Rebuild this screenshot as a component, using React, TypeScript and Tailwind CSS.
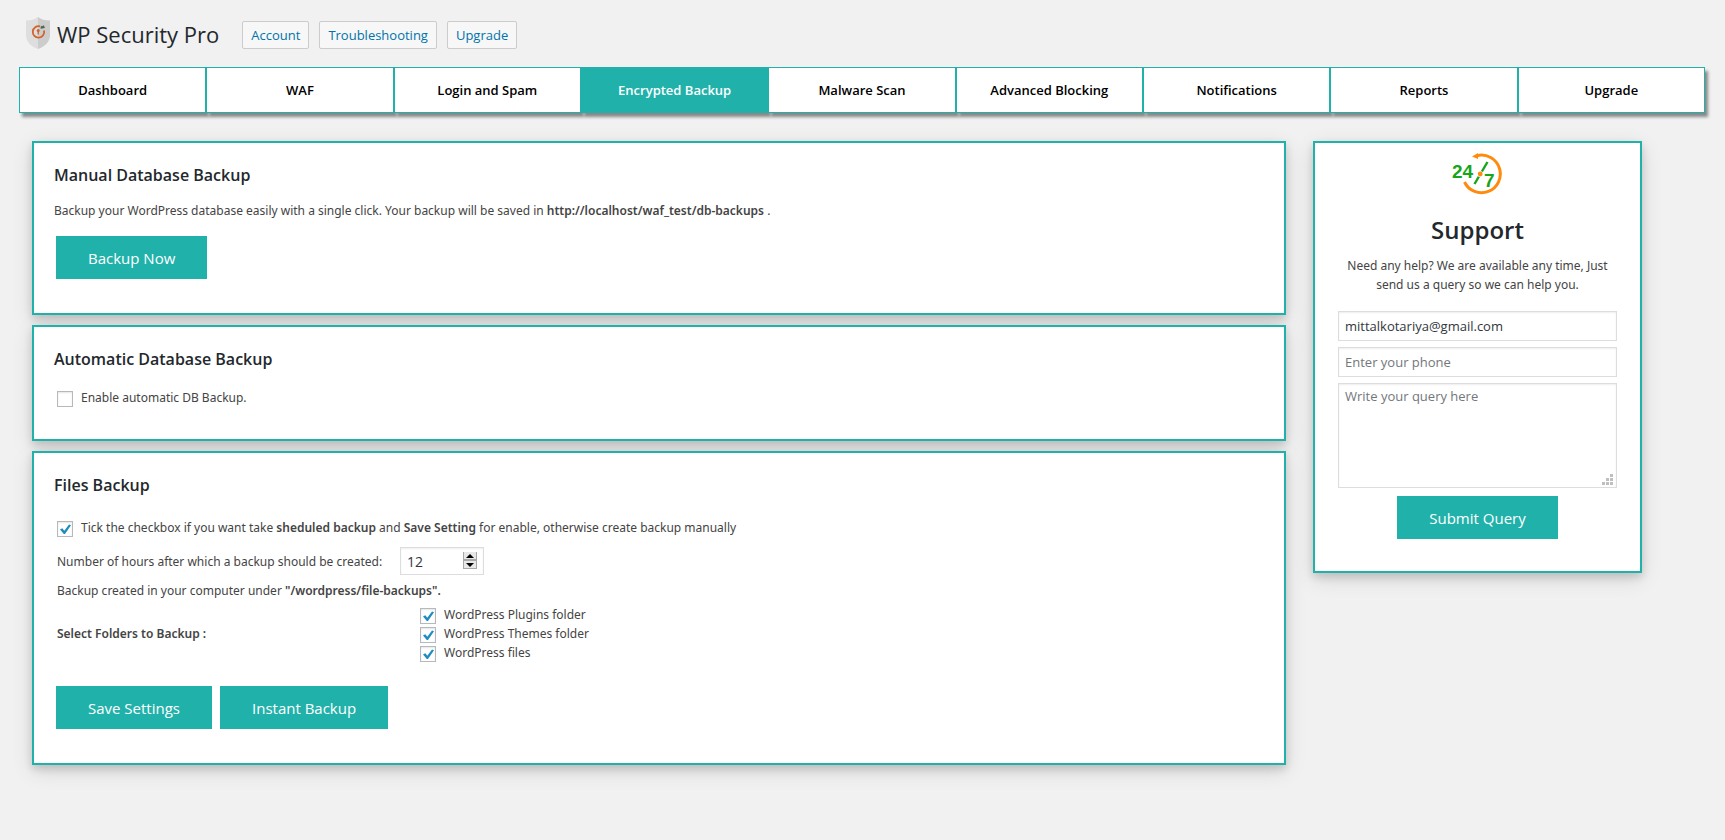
import React, { useState } from "react";

const tabs = [
    "Dashboard",
    "WAF",
    "Login and Spam",
    "Encrypted Backup",
    "Malware Scan",
    "Advanced Blocking",
    "Notifications",
    "Reports",
    "Upgrade",
];

const folders = [
    { id: "plugins", label: "WordPress Plugins folder" },
    { id: "themes", label: "WordPress Themes folder" },
    { id: "files", label: "WordPress files" },
];

const fieldClass =
    "w-full border border-[#dddddd] bg-white px-[6px] font-['Open_Sans',sans-serif] text-[#32373c] shadow-[inset_0_1px_2px_rgba(0,0,0,0.07)] placeholder:text-[#72777c] outline-none";

const ShieldLogo = () => (
    <svg width="24" height="32" viewBox="0 0 24 32" aria-hidden="true">
        <path d="M12 0C9 2.500 5 3.400 0 3.400V18c0 7 5 11.500 12 14z" fill="#dedede" />
        <path d="M12 0c3 2.500 7 3.400 12 3.400V18c0 7-5 11.500-12 14z" fill="#cccccc" />
        <path
            d="M14 9.400A5.700 5.700 0 1 0 18 13.500"
            fill="none"
            stroke="#d2622f"
            strokeWidth="1.800"
        />
        <circle cx="12.200" cy="13.400" r="1.500" fill="#d2622f" />
        <path d="M11.500 14h1.400v3.600h-1.400z" fill="#d2622f" />
        <path d="M14.500 11.800l.4-2.700 1.400.2 1.200-1.400.5 1.500 1.300.6-1.400 1.300z" fill="#4a6b4a" />
    </svg>
);

const SupportLogo = () => (
    <svg width="52" height="42" viewBox="0 0 52 42" aria-hidden="true">
        <path
            d="M25 2.700A18.800 18.800 0 1 1 12.500 29"
            fill="none"
            stroke="#ff8a0c"
            strokeWidth="3"
        />
        <path d="M20 3.500L26 0v6z" fill="#ff8a0c" />
        <path d="M35.500 9L22.500 31" stroke="#17a51b" strokeWidth="2.400" />
        <circle cx="28.200" cy="21" r="3" fill="#fff" />
        <circle cx="28.200" cy="21" r="2.400" fill="#ff8a0c" />
        <text x="0" y="25" fontSize="19" fontWeight="700" fill="#17a51b" fontFamily="Liberation Sans, sans-serif">
            24
        </text>
        <text x="32" y="34" fontSize="19" fontWeight="700" fill="#17a51b" fontFamily="Liberation Sans, sans-serif">
            7
        </text>
    </svg>
);

type CheckProps = {
    id: string;
    defaultChecked?: boolean;
    children: React.ReactNode;
};

const Check = ({ id, defaultChecked, children }: CheckProps) => (
    <div className="flex items-start gap-2">
        <span className="relative mt-[3px] block h-4 w-4 shrink-0">
            <input
                id={id}
                type="checkbox"
                defaultChecked={defaultChecked}
                className="peer block h-4 w-4 appearance-none border border-[#b4b9be] bg-white shadow-[inset_0_1px_2px_rgba(0,0,0,0.1)]"
            />
            <svg
                viewBox="0 0 16 16"
                className="pointer-events-none absolute inset-0 hidden h-4 w-4 peer-checked:block"
                aria-hidden="true"
            >
                <path d="M3 8.600l2.300-1.400 2 2.500L12 3.400l2 .9L8 13H6.800z" fill="#1e8cbe" />
            </svg>
        </span>
        <label htmlFor={id}>{children}</label>
    </div>
);

type ActionProps = {
    type?: "button" | "submit";
    children: React.ReactNode;
};

const ActionButton = ({ type = "button", children }: ActionProps) => (
    <button
        type={type}
        className="h-[43px] bg-[#20b2aa] px-8 pt-[2px] font-['Open_Sans',sans-serif] text-[15px] text-white"
    >
        {children}
    </button>
);

type CardProps = {
    title: string;
    children: React.ReactNode;
};

const Card = ({ title, children }: CardProps) => (
    <section className="border-2 border-[#20b2aa] bg-white px-5 pt-5 pb-8 shadow-[0_4px_8px_0_rgba(0,0,0,0.14),0_6px_20px_0_rgba(0,0,0,0.12)]">
        <h3 className="font-['Open_Sans',sans-serif] text-base leading-6 font-semibold text-[#23282d]">{title}</h3>
        {children}
    </section>
);

const App = () => {
    const [hours, setHours] = useState(12);

    return (
        <div className="min-h-screen bg-[#f1f1f1] font-['Noto_Sans','Open_Sans',sans-serif] text-[12px] leading-[19px] text-[#444444]">
            {/* Header */}
            <header className="flex items-end pt-[17px] pl-[26px] font-['Open_Sans',sans-serif]">
                <ShieldLogo />
                <h1 className="ml-[7px] text-[22px] leading-[30px] text-[#23282d]">WP Security Pro</h1>
                <div className="ml-[23px] flex gap-[10px]">
                    {["Account", "Troubleshooting", "Upgrade"].map((item) => (
                        <a
                            key={item}
                            href="#"
                            className="rounded-xs border border-[#cccccc] bg-[#f7f7f7] px-2 py-[3px] text-[13px] leading-5 font-medium text-[#0073aa]"
                        >
                            {item}
                        </a>
                    ))}
                </div>
            </header>

            {/* Tabs */}
            <nav className="mt-[18px] mr-5 ml-[19px] flex font-['Open_Sans',sans-serif]">
                {tabs.map((tab) => (
                    <a
                        key={tab}
                        href="#"
                        className={`flex h-[46px] flex-1 items-center justify-center border border-[#20b2aa] text-[13px] font-semibold shadow-[3px_4px_3px_#888888] ${
                            tab === "Encrypted Backup" ? "bg-[#20b2aa] text-white" : "bg-white text-black"
                        }`}
                    >
                        {tab}
                    </a>
                ))}
            </nav>

            <div className="flex items-start gap-[27px] pt-7 pr-[83px] pb-10 pl-8">
                <main className="flex flex-1 flex-col gap-[10px]">
                    <Card title="Manual Database Backup">
                        <p className="mt-[14px]">
                            Backup your WordPress database easily with a single click. Your backup will be saved in{" "}
                            <b className="font-semibold">http://localhost/waf_test/db-backups</b> .
                        </p>
                        <div className="mt-4 pb-[2px] pl-[2px]">
                            <ActionButton>Backup Now</ActionButton>
                        </div>
                    </Card>

                    <Card title="Automatic Database Backup">
                        <div className="mt-[17px] pl-[3px]">
                            <Check id="auto-db">Enable automatic DB Backup.</Check>
                        </div>
                    </Card>

                    <Card title="Files Backup">
                        <form onSubmit={(e) => e.preventDefault()}>
                            <div className="mt-[21px] pl-[3px]">
                                <Check id="scheduled" defaultChecked>
                                    Tick the checkbox if you want take <b className="font-semibold">sheduled backup</b> and{" "}
                                    <b className="font-semibold">Save Setting</b> for enable, otherwise create backup manually
                                </Check>
                                <div className="mt-[10px] flex items-center gap-[5px]">
                                    <label htmlFor="hours" className="w-[338px]">
                                        Number of hours after which a backup should be created:
                                    </label>
                                    <div className="relative w-[84px]">
                                        <input
                                            id="hours"
                                            type="number"
                                            value={hours}
                                            onChange={(e) => setHours(Number(e.target.value))}
                                            className={`${fieldClass} h-7 text-sm [appearance:textfield] [&::-webkit-inner-spin-button]:appearance-none`}
                                        />
                                        <div className="absolute top-[5px] right-[7px] flex w-[14px] flex-col border-x border-[#a8a8a8] bg-[#e8e8e8]">
                                            <button
                                                type="button"
                                                aria-label="More hours"
                                                onClick={() => setHours(hours + 1)}
                                                className="flex h-2 items-center justify-center border-b border-[#a8a8a8]"
                                            >
                                                <svg width="8" height="4" viewBox="0 0 8 4">
                                                    <path d="M0 4l4-4 4 4z" />
                                                </svg>
                                            </button>
                                            <button
                                                type="button"
                                                aria-label="Fewer hours"
                                                onClick={() => setHours(hours - 1)}
                                                className="flex h-[9px] items-center justify-center border-y border-[#a8a8a8]"
                                            >
                                                <svg width="8" height="4" viewBox="0 0 8 4">
                                                    <path d="M0 0l4 4 4-4z" />
                                                </svg>
                                            </button>
                                        </div>
                                    </div>
                                </div>
                                <p className="mt-[6px]">
                                    Backup created in your computer under{" "}
                                    <b className="font-semibold">"/wordpress/file-backups".</b>
                                </p>
                                <fieldset className="mt-[5px] flex items-center">
                                    <span className="w-[363px] font-semibold">Select Folders to Backup :</span>
                                    <div>
                                        {folders.map((folder) => (
                                            <Check key={folder.id} id={folder.id} defaultChecked>
                                                {folder.label}
                                            </Check>
                                        ))}
                                    </div>
                                </fieldset>
                            </div>
                            <div className="mt-6 flex gap-2 pb-[2px] pl-[2px]">
                                <ActionButton type="submit">Save Settings</ActionButton>
                                <ActionButton>Instant Backup</ActionButton>
                            </div>
                        </form>
                    </Card>
                </main>

                {/* Support */}
                <aside className="w-[329px] border-2 border-[#20b2aa] bg-white px-[23px] pt-[10px] pb-8 text-center shadow-[0_4px_8px_0_rgba(0,0,0,0.14),0_6px_20px_0_rgba(0,0,0,0.12)]">
                    <div className="flex justify-center">
                        <SupportLogo />
                    </div>
                    <h2 className="mt-[19px] font-['Open_Sans',sans-serif] text-2xl leading-8 font-semibold text-[#23282d]">
                        Support
                    </h2>
                    <p className="mt-[10px]">
                        Need any help? We are available any time, Just send us a query so we can help you.
                    </p>
                    <form className="mt-[17px] flex flex-col gap-[6px]" onSubmit={(e) => e.preventDefault()}>
                        <input
                            type="email"
                            aria-label="Email"
                            defaultValue="mittalkotariya@gmail.com"
                            className={`${fieldClass} h-[30px] text-[13px]`}
                        />
                        <input
                            type="tel"
                            aria-label="Phone"
                            placeholder="Enter your phone"
                            className={`${fieldClass} h-[30px] text-[13px]`}
                        />
                        <div className="relative">
                            <textarea
                                aria-label="Query"
                                placeholder="Write your query here"
                                className={`${fieldClass} block h-[105px] resize-none py-[3px] text-[13px] leading-[18px]`}
                            />
                            <svg
                                width="11"
                                height="11"
                                viewBox="0 0 11 11"
                                fill="#bfbfbf"
                                className="pointer-events-none absolute right-1 bottom-[3px]"
                                aria-hidden="true"
                            >
                                <path d="M8 0h3v3H8zM4 4h3v3H4zM8 4h3v3H8zM0 8h3v3H0zM4 8h3v3H4zM8 8h3v3H8z" />
                            </svg>
                        </div>
                        <div className="mt-[2px]">
                            <ActionButton type="submit">Submit Query</ActionButton>
                        </div>
                    </form>
                </aside>
            </div>
        </div>
    );
};

export default App;
